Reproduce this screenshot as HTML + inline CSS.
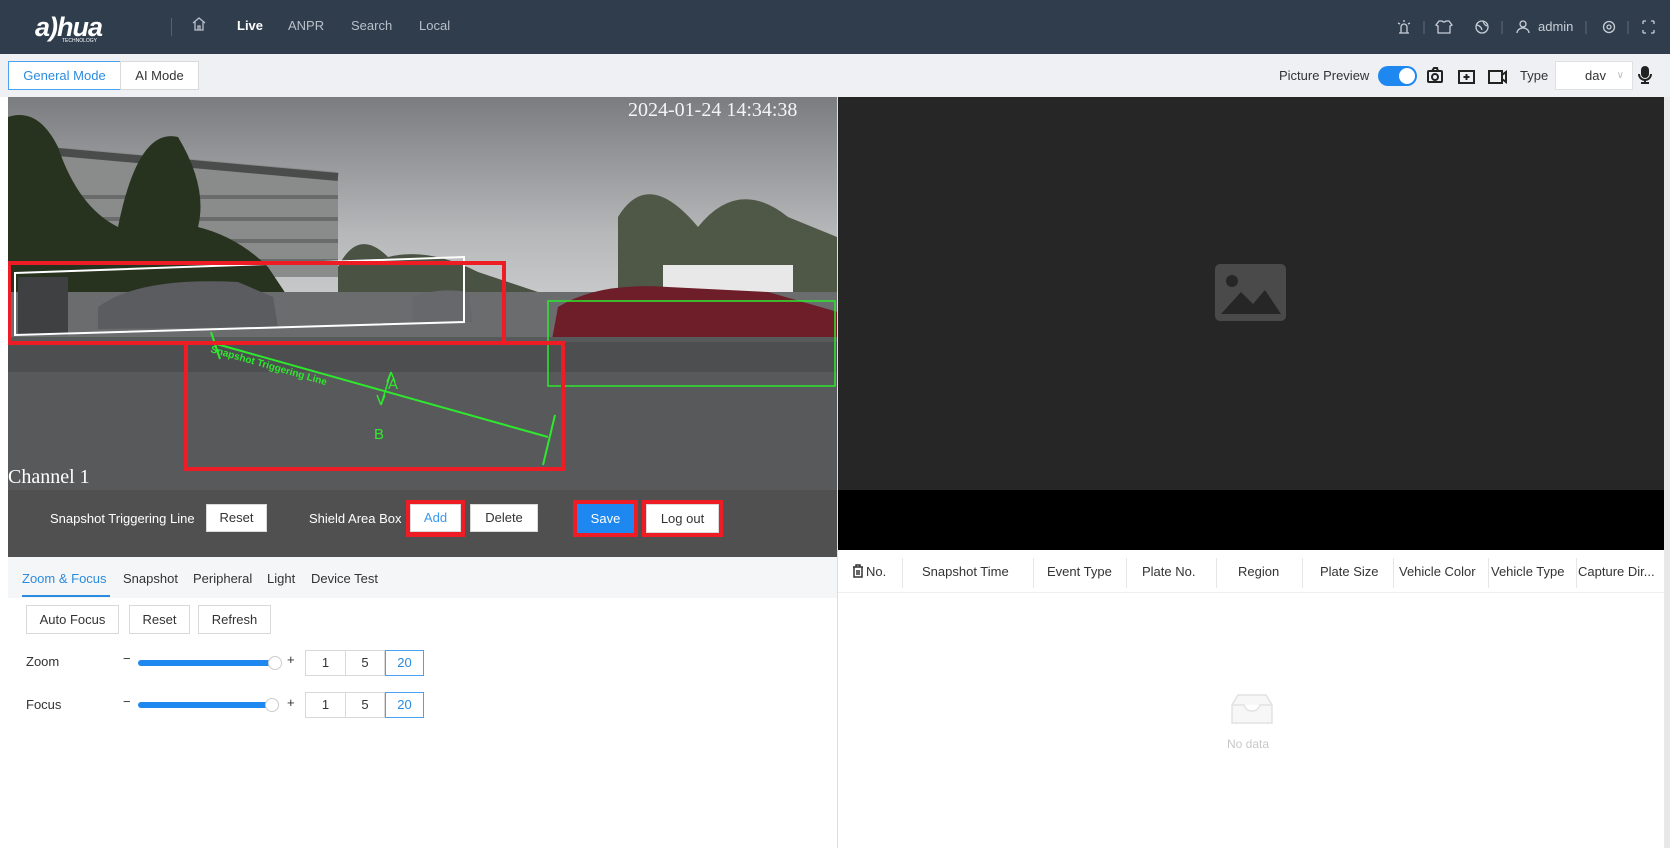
<!DOCTYPE html>
<html><head><meta charset="utf-8"><style>
*{margin:0;padding:0;box-sizing:border-box}
body{width:1670px;height:848px;overflow:hidden;background:#fff;font-family:"Liberation Sans",sans-serif;font-size:13px;color:#333;position:relative}
.a{position:absolute}
.hdr{left:0;top:0;width:1670px;height:54px;background:#2f3d4d}
.nav{color:#b8c0ca;font-size:13px;top:18px}
.sub{left:0;top:54px;width:1670px;height:43px;background:#eef0f3}
.btn{position:absolute;background:#fff;border:1px solid #d9d9d9;text-align:center;font-size:13px;color:#333}
.th{top:564px;font-size:13px;color:#333}
.sep{top:558px;width:1px;height:30px;background:#e6e6e6}
</style></head><body>
<div class="a hdr"></div>
<div class="a" style="left:35px;top:12px;color:#fff;font:italic bold 27px 'Liberation Sans',sans-serif;letter-spacing:-1px">a)hua</div>
<div class="a" style="left:62px;top:38px;color:#fff;font-size:5px">TECHNOLOGY</div>
<div class="a" style="left:171px;top:18px;width:1px;height:18px;background:#56626f"></div>
<svg class="a" style="left:192px;top:17px" width="14" height="14" viewBox="0 0 14 14"><path d="M1 6L7 1L13 6M3 5V13H11V5M6 13V9H8V13" fill="none" stroke="#b8c0ca" stroke-width="1.3"/></svg>
<div class="a nav" style="left:237px;color:#fff;font-weight:bold">Live</div>
<div class="a nav" style="left:288px">ANPR</div>
<div class="a nav" style="left:351px">Search</div>
<div class="a nav" style="left:419px">Local</div>
<svg class="a" style="left:1396px;top:18px" width="260" height="18" viewBox="0 0 260 18" fill="none" stroke="#c8ced6" stroke-width="1.3">
<path d="M3 15H13M5 15V9A3 3 0 0 1 11 9V15M8 2V4M2 5L4 6M14 5L12 6"/>
<path d="M28 3V16" stroke="#56626f"/>
<path d="M43 3L46 3Q48 5 50 3L53 3L56 7L54 8V15H42V8L40 7Z"/>
<circle cx="86" cy="9" r="6"/><path d="M81 7Q85 8 86 12M87 3Q88 7 91 8"/>
<path d="M106 3V16" stroke="#56626f"/>
<circle cx="127" cy="6" r="3"/><path d="M121 15A6 5 0 0 1 133 15"/>
<path d="M190 3V16" stroke="#56626f"/>
<circle cx="213" cy="9" r="5.5"/><circle cx="213" cy="9" r="2"/>
<path d="M232 3V16" stroke="#56626f"/>
<path d="M247 3H250M247 3V6M258 3H255M258 3V6M247 15H250M247 15V12M258 15H255M258 15V12"/>
</svg>
<div class="a" style="left:1538px;top:19px;color:#c8ced6;font-size:13px">admin</div>

<div class="a sub"></div>
<div class="btn" style="left:8px;top:61px;width:113px;height:29px;line-height:27px;border-color:#4aa3f0;color:#2b8be0">General Mode</div>
<div class="btn" style="left:120px;top:61px;width:79px;height:29px;line-height:27px">AI Mode</div>
<div class="a" style="left:1279px;top:68px;font-size:13px">Picture Preview</div>
<div class="a" style="left:1378px;top:66px;width:39px;height:20px;border-radius:10px;background:#1e88f0"><div class="a" style="left:21px;top:2px;width:16px;height:16px;border-radius:8px;background:#fff"></div></div>
<svg class="a" style="left:1426px;top:66px" width="100" height="20" viewBox="0 0 100 20" fill="none" stroke="#222" stroke-width="2">
<rect x="2" y="5" width="14" height="11" rx="1"/><circle cx="9" cy="11" r="3"/><path d="M6 5L8 2H11L12 5"/>
<rect x="33" y="5" width="15" height="12"/><path d="M40.5 8V14M37.5 11H43.5"/>
<rect x="63" y="5" width="13" height="12"/><path d="M76 9L80 6V16L76 13"/>
</svg>
<div class="a" style="left:1520px;top:68px;font-size:13px">Type</div>
<div class="btn" style="left:1555px;top:61px;width:78px;height:29px;line-height:27px;text-align:left;padding-left:29px;border-color:#e0e0e0">dav<span style="position:absolute;right:8px;color:#bbb;font-size:10px">∨</span></div>
<svg class="a" style="left:1637px;top:65px" width="16" height="20" viewBox="0 0 16 20"><rect x="4" y="1" width="8" height="12" rx="4" fill="#222"/><path d="M2 9A6 6 0 0 0 14 9M8 15V18M4 18H12" stroke="#222" stroke-width="2" fill="none"/></svg>

<!-- video -->
<svg class="a" style="left:8px;top:97px" width="829" height="393" viewBox="0 0 829 393">
<defs><linearGradient id="sky" x1="0" y1="0" x2="0" y2="1"><stop offset="0" stop-color="#7a7c7f"/><stop offset=".35" stop-color="#b6b8ba"/><stop offset=".6" stop-color="#d2d3d4"/></linearGradient></defs>
<rect width="829" height="393" fill="url(#sky)"/>
<path d="M50 50L330 75L330 180L50 180Z" fill="#8a8c8c"/>
<path d="M50 55L330 80" stroke="#4a4c4c" stroke-width="8"/>
<path d="M50 100H330M50 122H330M50 144H330M50 164H330" stroke="#6a6c6c" stroke-width="4"/>
<path d="M0 20Q30 10 50 50Q70 110 110 130Q130 30 170 40Q200 90 190 130Q230 140 260 170L280 200L0 200Z" fill="#27321f"/>
<path d="M330 170Q350 130 380 160Q420 150 470 175L530 195L330 200Z" fill="#4a5343"/>
<path d="M610 120Q640 70 690 130Q730 80 780 120L829 140L829 210L610 210Z" fill="#4f5847"/>
<rect x="655" y="168" width="130" height="35" fill="#e8e8e8"/>
<rect x="0" y="195" width="829" height="45" fill="#6a6c6e"/>
<path d="M90 210Q130 180 230 185L265 200L270 230L90 232Z" fill="#5a5c60"/>
<path d="M10 180H60V238H10Z" fill="#3e4042"/>
<path d="M405 200Q430 190 460 195L465 225L405 225Z" fill="#66686c"/>
<path d="M550 210Q590 185 660 190L760 195L830 215L830 262L540 264Z" fill="#6e1e28"/>
<circle cx="623" cy="255" r="13" fill="#222"/><circle cx="805" cy="255" r="13" fill="#222"/>
<rect x="0" y="240" width="829" height="153" fill="#58595a"/>
<rect x="0" y="245" width="829" height="30" fill="#4d4e4f"/>
<polygon points="7,176 456,160 456,225 7,238" fill="none" stroke="#fff" stroke-width="2"/>
<rect x="540" y="204" width="287" height="85" fill="none" stroke="#2ee82e" stroke-width="1.5"/>
<path d="M205 246L540 340M203 235L212 262M547 318L535 368" stroke="#2ee82e" stroke-width="2"/>
<text x="202" y="255" fill="#2ee82e" font-size="10" font-weight="bold" transform="rotate(16 202 255)">Snapshot Triggering Line</text>
<path d="M383 275L373 308M383 275L379 285M383 275L387 285M373 308L369 298M373 308L377 298" stroke="#2ee82e" stroke-width="1.5" fill="none"/>
<text x="380" y="292" fill="#2ee82e" font-size="15">A</text>
<text x="366" y="342" fill="#2ee82e" font-size="15">B</text>
<rect x="1" y="166" width="495" height="80" fill="none" stroke="#ee1c25" stroke-width="4"/>
<rect x="178" y="246" width="377" height="126" fill="none" stroke="#ee1c25" stroke-width="4"/>
<text x="620" y="19" fill="#f4f4f4" font-family="Liberation Serif" font-size="20">2024-01-24 14:34:38</text>
<text x="0" y="386" fill="#fff" font-family="Liberation Serif" font-size="20">Channel 1</text>
</svg>
<div class="a" style="left:8px;top:490px;width:829px;height:67px;background:#505050"></div>
<div class="a" style="left:50px;top:511px;color:#fff">Snapshot Triggering Line</div>
<div class="btn" style="left:206px;top:504px;width:61px;height:28px;line-height:26px">Reset</div>
<div class="a" style="left:309px;top:511px;color:#fff">Shield Area Box</div>
<div class="a" style="left:406px;top:500px;width:59px;height:37px;background:#ee1c25"></div>
<div class="btn" style="left:410px;top:504px;width:51px;height:28px;line-height:26px;color:#3a9af0">Add</div>
<div class="btn" style="left:470px;top:504px;width:68px;height:28px;line-height:26px">Delete</div>
<div class="a" style="left:573px;top:500px;width:65px;height:37px;background:#ee1c25"></div>
<div class="a" style="left:577px;top:504px;width:57px;height:29px;line-height:29px;background:#1e88f0;color:#fff;text-align:center">Save</div>
<div class="a" style="left:642px;top:500px;width:81px;height:37px;background:#ee1c25"></div>
<div class="btn" style="left:646px;top:504px;width:73px;height:29px;line-height:27px">Log out</div>

<!-- left lower -->
<div class="a" style="left:8px;top:557px;width:829px;height:41px;background:#f5f6f7"></div>
<div class="a" style="left:22px;top:571px;color:#2b8be0">Zoom &amp; Focus</div>
<div class="a" style="left:22px;top:595px;width:88px;height:2px;background:#2b8be0"></div>
<div class="a" style="left:123px;top:571px">Snapshot</div>
<div class="a" style="left:193px;top:571px">Peripheral</div>
<div class="a" style="left:267px;top:571px">Light</div>
<div class="a" style="left:311px;top:571px">Device Test</div>
<div class="btn" style="left:26px;top:605px;width:93px;height:29px;line-height:27px">Auto Focus</div>
<div class="btn" style="left:129px;top:605px;width:61px;height:29px;line-height:27px">Reset</div>
<div class="btn" style="left:198px;top:605px;width:73px;height:29px;line-height:27px">Refresh</div>
<div class="a" style="left:26px;top:654px">Zoom</div>
<div class="a" style="left:123px;top:651px">−</div>
<div class="a" style="left:138px;top:660px;width:136px;height:6px;border-radius:3px;background:#1e88f0"></div>
<div class="a" style="left:268px;top:656px;width:14px;height:14px;border-radius:7px;background:#fff;border:1px solid #ccc"></div>
<div class="a" style="left:287px;top:652px">+</div>
<div class="a" style="left:26px;top:697px">Focus</div>
<div class="a" style="left:123px;top:694px">−</div>
<div class="a" style="left:138px;top:702px;width:132px;height:6px;border-radius:3px;background:#1e88f0"></div>
<div class="a" style="left:265px;top:698px;width:14px;height:14px;border-radius:7px;background:#fff;border:1px solid #ccc"></div>
<div class="a" style="left:287px;top:695px">+</div>
<div class="btn" style="left:305px;top:650px;width:41px;height:26px;line-height:24px">1</div>
<div class="btn" style="left:345px;top:650px;width:40px;height:26px;line-height:24px">5</div>
<div class="btn" style="left:385px;top:650px;width:39px;height:26px;line-height:24px;border-color:#4aa3f0;color:#2b8be0">20</div>
<div class="btn" style="left:305px;top:692px;width:41px;height:26px;line-height:24px">1</div>
<div class="btn" style="left:345px;top:692px;width:40px;height:26px;line-height:24px">5</div>
<div class="btn" style="left:385px;top:692px;width:39px;height:26px;line-height:24px;border-color:#4aa3f0;color:#2b8be0">20</div>

<!-- right panel -->
<div class="a" style="left:837px;top:97px;width:1px;height:751px;background:#ddd"></div>
<div class="a" style="left:838px;top:97px;width:826px;height:393px;background:#262626"></div>
<svg class="a" style="left:1215px;top:264px" width="71" height="57" viewBox="0 0 71 57"><rect width="71" height="57" rx="5" fill="#4a4a4a"/><circle cx="17" cy="17" r="6" fill="#262626"/><path d="M6 50L26 28L38 40L50 26L66 50Z" fill="#262626"/></svg>
<div class="a" style="left:838px;top:490px;width:826px;height:60px;background:#000"></div>
<div class="a" style="left:1664px;top:97px;width:6px;height:751px;background:#e8e8e8"></div>
<div class="a" style="left:838px;top:592px;width:826px;height:1px;background:#eee"></div>
<svg class="a" style="left:852px;top:564px" width="12" height="14" viewBox="0 0 12 14"><path d="M1 3H11M4 3V1H8V3M2 3V13H10V3M5 6V11M7 6V11" stroke="#333" stroke-width="1.5" fill="none"/></svg>
<div class="a th" style="left:866px">No.</div>
<div class="a sep" style="left:902px"></div>
<div class="a th" style="left:922px">Snapshot Time</div>
<div class="a sep" style="left:1033px"></div>
<div class="a th" style="left:1047px">Event Type</div>
<div class="a sep" style="left:1126px"></div>
<div class="a th" style="left:1142px">Plate No.</div>
<div class="a sep" style="left:1216px"></div>
<div class="a th" style="left:1238px">Region</div>
<div class="a sep" style="left:1302px"></div>
<div class="a th" style="left:1320px">Plate Size</div>
<div class="a sep" style="left:1393px"></div>
<div class="a th" style="left:1399px">Vehicle Color</div>
<div class="a sep" style="left:1488px"></div>
<div class="a th" style="left:1491px">Vehicle Type</div>
<div class="a sep" style="left:1576px"></div>
<div class="a th" style="left:1578px">Capture Dir...</div>
<svg class="a" style="left:1230px;top:691px" width="44" height="34" viewBox="0 0 44 34"><path d="M2 14L8 4H36L42 14V32H2Z M2 14H14Q16 20 22 20Q28 20 30 14H42" fill="#f7f7f7" stroke="#e2e2e2" stroke-width="1.5"/></svg>
<div class="a" style="left:1227px;top:737px;color:#c8c8c8;font-size:12px">No data</div>
</body></html>
